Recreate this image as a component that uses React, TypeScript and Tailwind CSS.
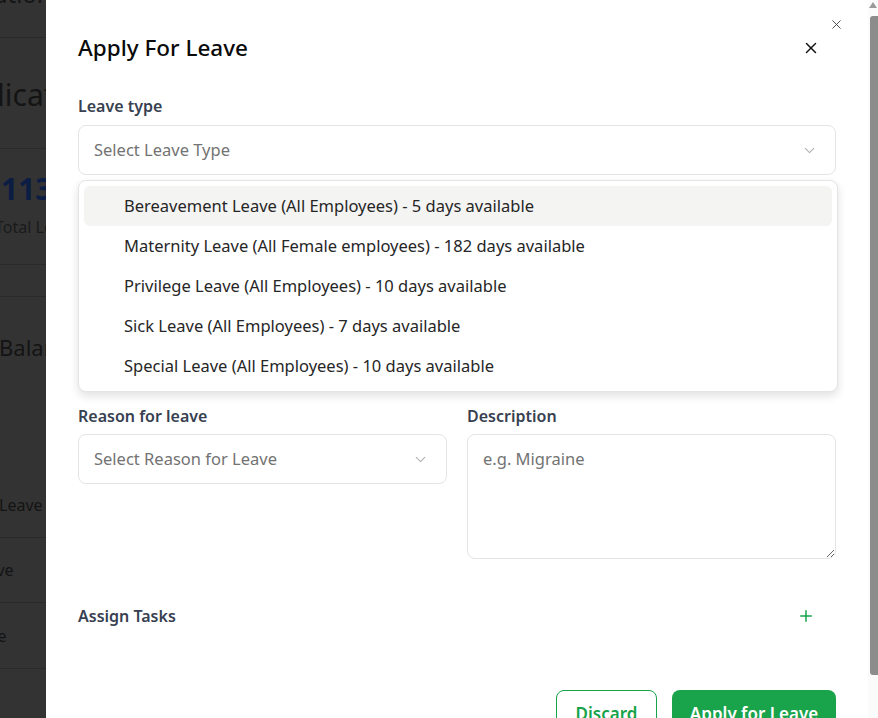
import { X, ChevronDown, Plus } from 'lucide-react';

const leaveTypes = [
  'Bereavement Leave (All Employees) - 5 days available',
  'Maternity Leave (All Female employees) - 182 days available',
  'Privilege Leave (All Employees) - 10 days available',
  'Sick Leave (All Employees) - 7 days available',
  'Special Leave (All Employees) - 10 days available',
];

function BackdropPage() {
  // the page behind the drawer, dimmed by the overlay
  return (
    <div className="w-[46px] shrink-0 h-full overflow-hidden bg-[#333333] text-[#141414] flex flex-col">
      <div className="h-[38px] shrink-0 border-b border-[#2a2a2a] whitespace-nowrap flex flex-col">
        <div className="text-[24px] leading-[32px] -mt-[22px] -ml-[6px]">ations</div>
      </div>
      <div className="h-[111px] shrink-0 border-b border-[#2a2a2a] flex items-center whitespace-nowrap">
        <div className="text-[30px] leading-[36px] -ml-[3px] mt-[4px]">lications</div>
      </div>
      <div className="h-[116px] shrink-0 border-b border-[#2a2a2a] whitespace-nowrap flex flex-col">
        <div className="text-[30px] leading-[36px] font-bold text-[#0c1d44] mt-[22px] ml-[1px]">1130</div>
        <div className="text-[16px] leading-[24px] text-[#1a1a1a] mt-[8px] -ml-[5px]">Total Leave</div>
      </div>
      <div className="h-[32px] shrink-0 border-b border-[#2a2a2a]" />
      <div className="h-[241px] shrink-0 border-b border-[#2a2a2a] whitespace-nowrap flex flex-col">
        <div className="text-[22px] leading-[30px] mt-[35px] -ml-[1px]">Balance</div>
        <div className="text-[16px] leading-[24px] mt-[131px] -ml-[1px]">Leave</div>
      </div>
      <div className="h-[65px] shrink-0 border-b border-[#2a2a2a] whitespace-nowrap flex items-center">
        <div className="text-[16px] leading-[24px] -ml-[30px]">Leave</div>
      </div>
      <div className="h-[66px] shrink-0 border-b border-[#2a2a2a] whitespace-nowrap flex items-center">
        <div className="text-[16px] leading-[24px] -ml-[37px]">Leave</div>
      </div>
    </div>
  );
}

function SelectBox({ placeholder }: { placeholder: string }) {
  return (
    <div className="h-[50px] rounded-[8px] border border-[#e4e4e4] bg-white flex items-center justify-between pl-[15px] pr-[17px]">
      <span className="text-[16.5px] text-[#737373]">{placeholder}</span>
      <ChevronDown className="w-[17px] h-[17px] text-[#b0b0b0]" strokeWidth={1.5} />
    </div>
  );
}

function Scrollbar() {
  return (
    <div className="w-[10px] shrink-0 h-full bg-[#fbfbfb] flex flex-col items-end">
      <div className="h-[16px] w-full flex justify-end pt-[2px]">
        <div className="w-0 h-0 border-l-[4px] border-r-[4px] border-b-[6px] border-l-transparent border-r-transparent border-b-[#9a9a9a] mr-[1px]" />
      </div>
      <div className="w-[8px] h-[659px] bg-[#8c8c8c] rounded-l-[3px]" />
    </div>
  );
}

export default function App() {
  return (
    <div
      className="w-[878px] h-[718px] flex overflow-hidden bg-white"
      style={{ fontFamily: '"Noto Sans", "Open Sans", sans-serif' }}
    >
      <BackdropPage />

      <div className="flex-1 flex bg-white">
        <div className="flex-1 relative px-[32px] pt-[30px]">
          <button className="absolute top-[17px] right-[24px] text-[#444]">
            <X className="w-[15px] h-[15px]" strokeWidth={1.5} />
          </button>

          <div className="flex items-center justify-between h-[36px]">
            <h2 className="text-[22.5px] font-medium text-[#0a0a0a]">Apply For Leave</h2>
            <X className="w-[18px] h-[18px] text-[#111] mr-[16px]" strokeWidth={2} />
          </div>

          {/* Leave type */}
          <div className="relative mt-[28px]">
            <label className="block text-[16px] leading-[24px] font-semibold text-[#374151]">Leave type</label>
            <div className="mt-[7px]">
              <SelectBox placeholder="Select Leave Type" />
            </div>

            <div className="absolute left-0 right-[-2px] top-full mt-[5px] z-10 bg-white rounded-[8px] border border-[#e4e4e4] shadow-[0_4px_10px_rgba(0,0,0,0.12)] p-[5px]">
              {leaveTypes.map((t, i) => (
                <div
                  key={t}
                  className={`h-[40px] flex items-center pl-[40px] rounded-[6px] text-[16.5px] text-[#262626] ${
                    i === 0 ? 'bg-[#f4f4f3]' : ''
                  }`}
                >
                  {t}
                </div>
              ))}
            </div>
          </div>

          {/* Dates, covered by the open list */}
          <div className="grid grid-cols-2 gap-x-[20px] h-[229px] pt-[20px]">
            <div>
              <label className="block text-[16px] leading-[24px] font-semibold text-[#374151]">Start date</label>
              <div className="mt-[6px] h-[50px] rounded-[8px] border border-[#e4e4e4]" />
            </div>
            <div>
              <label className="block text-[16px] leading-[24px] font-semibold text-[#374151]">End date</label>
              <div className="mt-[6px] h-[50px] rounded-[8px] border border-[#e4e4e4]" />
            </div>
          </div>

          {/* Reason + description */}
          <div className="grid grid-cols-2 gap-x-[20px]">
            <div>
              <label className="block text-[16px] leading-[24px] font-semibold text-[#374151]">Reason for leave</label>
              <div className="mt-[6px]">
                <SelectBox placeholder="Select Reason for Leave" />
              </div>
            </div>
            <div>
              <label className="block text-[16px] leading-[24px] font-semibold text-[#374151]">Description</label>
              <textarea
                className="mt-[6px] block w-full h-[125px] rounded-[8px] border border-[#e4e4e4] px-[15px] py-[12px] text-[16.5px] placeholder:text-[#737373] outline-none"
                placeholder="e.g. Migraine"
              />
            </div>
          </div>

          <div className="flex items-center justify-between mt-[45px] h-[24px]">
            <span className="text-[16px] font-semibold text-[#374151]">Assign Tasks</span>
            <Plus className="w-[18px] h-[18px] text-[#16a34a] mr-[21px]" strokeWidth={2} />
          </div>

          <div className="flex justify-end gap-[15px] mt-[62px]">
            <button className="h-[48px] w-[101px] rounded-[8px] border border-[#16a34a] text-[#16a34a] text-[17px] font-semibold">
              Discard
            </button>
            <button className="h-[48px] w-[164px] rounded-[8px] bg-[#19a34b] text-white text-[17px] font-semibold">
              Apply for Leave
            </button>
          </div>
        </div>
        <Scrollbar />
      </div>
    </div>
  );
}
